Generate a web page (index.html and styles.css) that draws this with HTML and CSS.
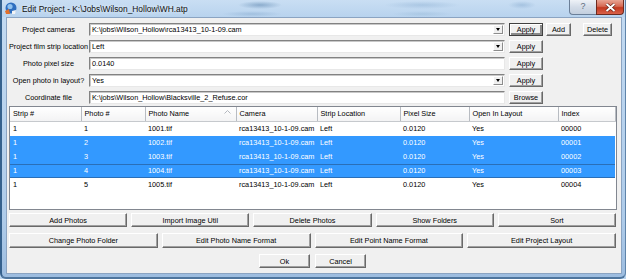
FILE: index.html
```html
<!DOCTYPE html>
<html>

<head>
    <meta charset="UTF-8">
    <title>Edit Project</title>
    <link rel="stylesheet" href="styles.css">
</head>

<body>

    <div class="window">
        <div class="titlebar">
            <svg class="app-icon" width="13" height="13" viewBox="0 0 13 13">
                <circle cx="7" cy="6" r="5.5" fill="#2f6fc0" />
                <circle cx="6" cy="4.5" r="2.6" fill="#8fc2f0" />
                <path d="M1 9 L5 7 L6 12 L2 12 Z" fill="#e2702a" />
                <path d="M8 9 L12 8 L11 12 L8 12 Z" fill="#f4f4f4" />
            </svg>
            <span class="title">Edit Project - K:\Jobs\Wilson_Hollow\WH.atp</span>
            <div class="caption">
                <div class="cap-help">?</div>
                <div class="cap-close">
                    <svg width="11" height="9" viewBox="0 0 11 9">
                        <path d="M1.5 1 L9.5 8 M9.5 1 L1.5 8" stroke="#5a1a10" stroke-width="3.2" />
                        <path d="M1.5 1 L9.5 8 M9.5 1 L1.5 8" stroke="#fff" stroke-width="2" />
                    </svg>
                </div>
            </div>
        </div>

        <div class="client">
            <div class="fields">
                <div class="field">
                    <label>Project cameras</label>
                    <div class="box combo">K:\jobs\Wilson_Hollow\rca13413_10-1-09.cam<i class="drop"></i></div>
                    <button class="btn apply default">Apply</button>
                    <button class="btn add">Add</button>
                    <button class="btn delete">Delete</button>
                </div>
                <div class="field">
                    <label>Project film strip location</label>
                    <div class="box combo">Left<i class="drop"></i></div>
                    <button class="btn apply">Apply</button>
                </div>
                <div class="field">
                    <label>Photo pixel size</label>
                    <div class="box">0.0140</div>
                    <button class="btn apply">Apply</button>
                </div>
                <div class="field">
                    <label>Open photo in layout?</label>
                    <div class="box combo">Yes<i class="drop"></i></div>
                    <button class="btn apply">Apply</button>
                </div>
                <div class="field">
                    <label>Coordinate file</label>
                    <div class="box">K:\jobs\Wilson_Hollow\Blacksville_2_Refuse.cor</div>
                    <button class="btn apply">Browse</button>
                </div>
            </div>

            <div class="list">
                <table>
                    <colgroup>
                        <col style="width:71px">
                        <col style="width:64px">
                        <col style="width:91px">
                        <col style="width:81px">
                        <col style="width:83px">
                        <col style="width:69px">
                        <col style="width:89px">
                        <col style="width:57px">
                    </colgroup>
                    <thead>
                        <tr>
                            <th>Strip #</th>
                            <th>Photo #</th>
                            <th class="sorted">Photo Name
                                <svg class="sort" width="7" height="4" viewBox="0 0 7 4"><path d="M0.5 3.5 L3.5 0.5 L6.5 3.5" fill="none" stroke="#b4b8bf" /></svg>
                            </th>
                            <th>Camera</th>
                            <th>Strip Location</th>
                            <th>Pixel Size</th>
                            <th>Open In Layout</th>
                            <th>Index</th>
                        </tr>
                    </thead>
                    <tbody>
                        <tr>
                            <td>1</td><td>1</td><td>1001.tif</td><td>rca13413_10-1-09.cam</td><td>Left</td><td>0.0120</td><td>Yes</td><td>00000</td>
                        </tr>
                        <tr class="sel">
                            <td>1</td><td>2</td><td>1002.tif</td><td>rca13413_10-1-09.cam</td><td>Left</td><td>0.0120</td><td>Yes</td><td>00001</td>
                        </tr>
                        <tr class="sel">
                            <td>1</td><td>3</td><td>1003.tif</td><td>rca13413_10-1-09.cam</td><td>Left</td><td>0.0120</td><td>Yes</td><td>00002</td>
                        </tr>
                        <tr class="sel focus">
                            <td>1</td><td>4</td><td>1004.tif</td><td>rca13413_10-1-09.cam</td><td>Left</td><td>0.0120</td><td>Yes</td><td>00003</td>
                        </tr>
                        <tr>
                            <td>1</td><td>5</td><td>1005.tif</td><td>rca13413_10-1-09.cam</td><td>Left</td><td>0.0120</td><td>Yes</td><td>00004</td>
                        </tr>
                    </tbody>
                </table>
            </div>

            <div class="actions row-one">
                <button class="btn wide">Add Photos</button>
                <button class="btn wide">Import Image Util</button>
                <button class="btn wide">Delete Photos</button>
                <button class="btn wide">Show Folders</button>
                <button class="btn wide">Sort</button>
            </div>
            <div class="actions row-two">
                <button class="btn wide">Change Photo Folder</button>
                <button class="btn wide">Edit Photo Name Format</button>
                <button class="btn wide">Edit Point Name Format</button>
                <button class="btn wide">Edit Project Layout</button>
            </div>
            <div class="actions row-three">
                <button class="btn dialog">Ok</button>
                <button class="btn dialog">Cancel</button>
            </div>
        </div>
    </div>

</body>

</html>
```

FILE: styles.css
```css
body {
    margin: 0;
    background-color: #b9d4ef;
    font-family: "Liberation Sans", Arial, sans-serif;
    font-size: 7.3px;
    color: #000;
}

.window {
    box-sizing: border-box;
    width: 626px;
    height: 279px;
    display: flex;
    flex-direction: column;
    background: linear-gradient(#c4dbf2, #aecbe9 80%, #9dbde0);
    border-left: 2px solid #35618d;
    border-right: 1px solid #5f84aa;
    border-bottom: 2px solid #4f769e;
    border-radius: 0 0 6px 6px;
}

/* title bar */

.titlebar {
    height: 17px;
    display: flex;
    align-items: center;
    background:
        radial-gradient(ellipse 22px 4px at 258px 5px, rgba(70, 115, 160, .45), transparent),
        radial-gradient(ellipse 30px 3px at 250px 14px, rgba(140, 175, 210, .55), transparent),
        radial-gradient(ellipse 38px 4px at 420px 5px, rgba(140, 175, 210, .45), transparent),
        radial-gradient(ellipse 30px 3px at 420px 14px, rgba(150, 185, 215, .45), transparent),
        radial-gradient(ellipse 14px 4px at 520px 5px, rgba(140, 175, 210, .55), transparent),
        linear-gradient(#c9def3, #b8d3ee);
}

.app-icon {
    margin-left: 2px;
    flex: none;
}

.title {
    margin-left: 5px;
    font-size: 8.4px;
    color: #111;
    text-shadow: 0 0 4px rgba(255, 255, 255, .9);
}

.caption {
    margin-left: auto;
    margin-right: 1px;
    align-self: flex-start;
    display: flex;
}

.cap-help {
    box-sizing: border-box;
    width: 27px;
    height: 15px;
    border: 1px solid #6b7f98;
    border-top: none;
    border-right: none;
    border-radius: 0 0 0 4px;
    background: linear-gradient(#eef2f7, #d3dce8 50%, #c3cfde);
    color: #5c6a7c;
    font-size: 9px;
    line-height: 13px;
    text-align: center;
}

.cap-close {
    box-sizing: border-box;
    width: 28px;
    height: 15px;
    border: 1px solid #6d2a1e;
    border-top: none;
    border-radius: 0 0 4px 0;
    background: linear-gradient(#e8a493, #d66a54 45%, #c2381f 55%, #d9624a);
    display: flex;
    align-items: center;
    justify-content: center;
}

/* client area */

.client {
    box-sizing: border-box;
    height: 257px;
    margin: 0 3px 3px 4px;
    padding-top: 5px;
    border: 1px solid #8ba4c2;
    background-color: #f0f0f0;
}

.fields {
    display: flex;
    flex-direction: column;
    gap: 4px;
}

.field {
    display: flex;
    height: 13px;
}

.field label {
    width: 81px;
    margin-left: 1px;
    text-align: center;
    line-height: 13px;
    white-space: nowrap;
}

.box {
    box-sizing: border-box;
    position: relative;
    width: 416px;
    height: 13px;
    padding-left: 2px;
    line-height: 11px;
    background: #fff;
    border: 1px solid;
    border-color: #828282 #e8e8e8 #e8e8e8 #828282;
    box-shadow: inset 1px 1px 0 #c8c8c8;
}

.drop {
    position: absolute;
    right: 1px;
    top: 1px;
    box-sizing: border-box;
    width: 10px;
    height: 9px;
    background: #f0f0f0;
    border: 1px solid;
    border-color: #fff #8c8c8c #8c8c8c #fff;
}

.drop::after {
    content: "";
    position: absolute;
    left: 2px;
    top: 2px;
    border-left: 2.5px solid transparent;
    border-right: 2.5px solid transparent;
    border-top: 3px solid #000;
}

/* buttons */

.btn {
    box-sizing: border-box;
    margin: 0;
    padding: 0;
    font-family: inherit;
    font-size: 7.3px;
    color: #000;
    background: #f0f0f0;
    border: 1px solid;
    border-color: #fff #696969 #696969 #fff;
    box-shadow: inset -1px -1px 0 #a0a0a0;
    white-space: nowrap;
}

.btn.apply {
    width: 34px;
    margin-left: 4px;
}

.btn.default {
    border-color: #404040;
    box-shadow: inset 1px 1px 0 #fff, inset -2px -2px 0 #8a8a8a;
}

.btn.add {
    width: 25px;
    margin-left: 3px;
}

.btn.delete {
    width: 29px;
    margin-left: 12px;
}

/* photo list */

.list {
    box-sizing: border-box;
    width: 608px;
    height: 104px;
    margin: 2px 0 0 2px;
    border: 1px solid #828790;
    background: #fff;
    overflow: hidden;
}

.list table {
    table-layout: fixed;
    border-collapse: collapse;
    width: 605px;
}

.list th {
    height: 14px;
    padding: 0 0 0 3px;
    font-weight: normal;
    text-align: left;
    white-space: nowrap;
    background: linear-gradient(#ffffff, #f3f3f4);
    border-right: 1px solid #b8bcc2;
    border-bottom: 1px solid #c6c9cd;
    box-sizing: border-box;
    line-height: 13px;
}

.list th:first-child {
    padding-left: 3px;
}

.list th.sorted {
    position: relative;
}

.sort {
    position: absolute;
    right: 5px;
    top: 3px;
}

.list td {
    height: 14px;
    padding: 0 0 0 3px;
    line-height: 14px;
    white-space: nowrap;
    overflow: hidden;
}

.list tr.sel td {
    background: #3399ff;
    color: #fff;
}

.list tr.focus td {
    box-shadow: inset 0 1px 0 #2a6fb8, inset 0 -1px 0 #2a6fb8;
}

/* bottom button rows */

.actions {
    display: flex;
    gap: 4px;
    width: 607px;
    margin-left: 2px;
}

.actions .wide {
    flex: 1;
}

.row-one {
    margin-top: 3px;
    height: 14px;
}

.row-two {
    margin-top: 6px;
    height: 15px;
}

.row-three {
    margin-top: 6px;
    height: 14px;
    justify-content: center;
    gap: 5px;
}

.btn.dialog {
    width: 51px;
}
```
